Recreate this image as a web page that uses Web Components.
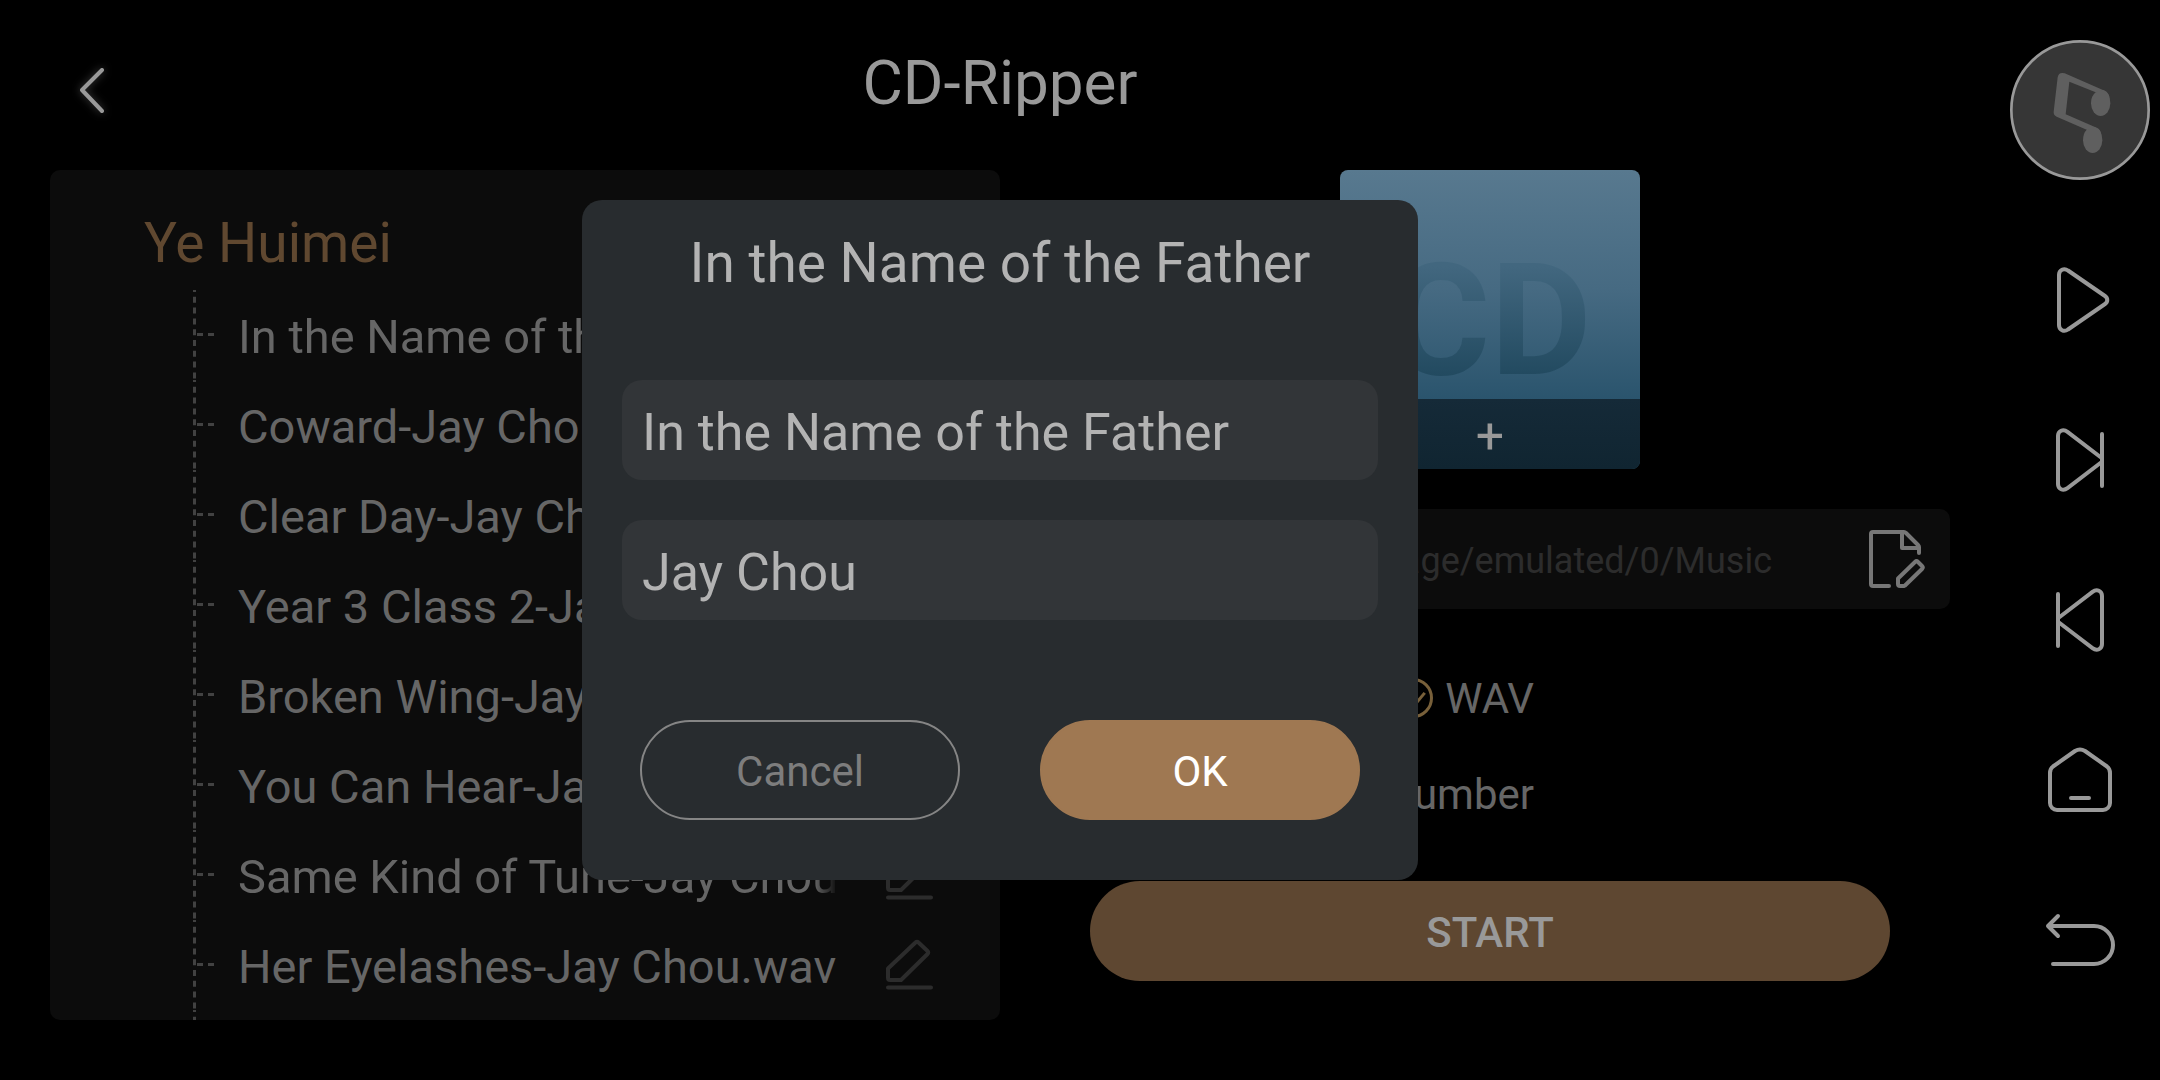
<!DOCTYPE html>
<html lang="en">
  <head>
    <meta charset="utf-8">
    <title>CD-Ripper</title>
    <style>
      body {
        margin: 0;
        background: #000;
        font-family: Roboto, "Liberation Sans", sans-serif;
      }
    </style>
  </head>
  <body>

    <!-- APP ----------------------------------------------------------------------------------------- -->

    <template id="ripper-app-template">
      <style>
        *{box-sizing: border-box;}
        :host {
          display: flex; flex-flow: row nowrap;
          height: 100vh;
          overflow: hidden;
          color: #666;
        }
        main {
          flex: 1; min-width: 0;
          position: relative;
          display: flex; flex-flow: column nowrap;
        }
        header {
          display: grid; grid-template-columns: 1fr auto 1fr; align-items: center;
          height: 170px;
          padding: 0 50px;
        }
        header button {
          width: 80px; height: 80px;
          padding: 0; border: 0; background: none;
        }
        header svg {
          display: block;
          filter: drop-shadow(0 0 4px #444);
        }
        h1 {
          margin: 0; padding-bottom: 6px;
          font-size: 62px; font-weight: 400;
          color: #999;
        }
        .content {
          flex: 1; min-height: 0;
          display: grid; grid-template-columns: 95fr 92fr; gap: 30px;
          padding: 0 50px 60px;
        }
        .overlay {
          position: absolute; inset: 0;
          display: grid; place-items: center;
        }
      </style>
      <main>
        <header>
          <button aria-label="Back">
            <svg width="80" height="80" viewBox="0 0 80 80" fill="none" stroke="#999" stroke-width="4" stroke-linecap="round" stroke-linejoin="round"><path d="M52 25 32 45 52 66"/></svg>
          </button>
          <h1>CD-Ripper</h1>
        </header>
        <div class="content">
          <ripper-tracks>
            <span slot="album">Ye Huimei</span>
            <ripper-track>In the Name of the Father-Jay Chou.wav</ripper-track>
            <ripper-track>Coward-Jay Chou.wav</ripper-track>
            <ripper-track>Clear Day-Jay Chou.wav</ripper-track>
            <ripper-track>Year 3 Class 2-Jay Chou.wav</ripper-track>
            <ripper-track>Broken Wing-Jay Chou.wav</ripper-track>
            <ripper-track>You Can Hear-Jay Chou.wav</ripper-track>
            <ripper-track>Same Kind of Tune-Jay Chou.wav</ripper-track>
            <ripper-track>Her Eyelashes-Jay Chou.wav</ripper-track>
            <ripper-track></ripper-track>
          </ripper-tracks>
          <ripper-settings></ripper-settings>
        </div>
        <div class="overlay">
          <ripper-dialog name="In the Name of the Father" artist="Jay Chou"></ripper-dialog>
        </div>
      </main>
      <ripper-sidebar></ripper-sidebar>
    </template>

    <!-- TRACK LIST ---------------------------------------------------------------------------------- -->

    <template id="ripper-tracks-template">
      <style>
        *{box-sizing: border-box;}
        :host {
          display: block;
          background: #0c0c0c;
          border-radius: 10px;
          overflow: hidden;
        }
        h2 {
          margin: 0; padding: 26px 94px 0;
          font-size: 55px; font-weight: 400; line-height: 94px;
          color: #604830;
        }
      </style>
      <h2><slot name="album"></slot></h2>
      <div role="list"><slot></slot></div>
    </template>

    <template id="ripper-track-template">
      <style>
        *{box-sizing: border-box;}
        :host {
          display: flex; flex-flow: row nowrap; align-items: center;
          height: 90px;
          padding-right: 60px;
        }
        .rail {
          flex: 0 0 188px;
        }
        .name {
          flex: 1; min-width: 0;
          padding-top: 4px;
          font-size: 47px; line-height: 60px;
          white-space: nowrap;
          overflow: hidden;
        }
        .name.long {
          -webkit-mask-image: linear-gradient(to left, transparent, #000 24px);
          mask-image: linear-gradient(to left, transparent, #000 24px);
        }
        button {
          flex: 0 0 60px;
          margin-left: 42px;
          padding: 0; border: 0; background: none;
        }
        svg {
          display: block;
        }
      </style>
      <svg class="rail" width="188" height="90" viewBox="0 0 188 90" fill="none" stroke="#424242" stroke-width="3">
        <path d="M144.500 0V90" stroke-dasharray="6 4.8" stroke-dashoffset="4"/>
        <path d="M147 44.500H153M158 44.500H164"/>
      </svg>
      <div class="name"><slot></slot></div>
      <button aria-label="Edit track">
        <svg width="60" height="60" viewBox="0 0 60 60" fill="none" stroke="#2c2c2c" stroke-width="4" stroke-linecap="round" stroke-linejoin="round">
          <path d="M8 33.5 35.5 7.500q1.500-1.500 3 0L47.500 16q1.500 1.500 0 3L21 45H10q-2 0-2-2ZM8 52.500H51"/>
        </svg>
      </button>
    </template>

    <!-- SETTINGS ------------------------------------------------------------------------------------ -->

    <template id="ripper-settings-template">
      <style>
        *{box-sizing: border-box;}
        :host {
          display: flex; flex-flow: column nowrap; align-items: center;
          gap: 40px;
        }
        button {
          padding: 0; border: 0; background: none;
          font: inherit;
        }
        .cover {
          width: 300px; height: 299px;
          display: flex; flex-flow: column nowrap; justify-content: flex-end;
          border-radius: 8px;
          overflow: hidden;
          background: linear-gradient(#58798f, #466a82 40%, #2a546d 77%, #22495f);
        }
        .cover span {
          text-align: center;
          font-size: 156px; font-weight: 700; line-height: 156px;
          color: transparent;
          background: linear-gradient(#42677f 15%, #224a60 85%);
          -webkit-background-clip: text;
          background-clip: text;
        }
        .cover button {
          height: 70px;
          padding-top: 4px;
          background: linear-gradient(#152a38, #102531);
          font-size: 50px; line-height: 66px;
          color: #999;
        }
        .path {
          width: 100%; height: 100px;
          display: flex; flex-flow: row nowrap; align-items: center; justify-content: flex-end;
          gap: 88px;
          padding-right: 20px;
          background: #0c0c0c;
          border-radius: 10px;
          font-size: 36px;
          color: #2c2c2c;
        }
        .path span {
          padding-top: 4px;
        }
        .path svg {
          display: block;
        }
        .options {
          width: 100%;
          padding-right: 416px;
          font-size: 42px;
        }
        label {
          display: flex; flex-flow: row nowrap; align-items: center; justify-content: flex-end;
          gap: 12px;
          height: 96px;
          padding-top: 2px;
        }
        input {
          appearance: none;
          width: 40px; height: 40px;
          margin: 0;
          display: grid; place-items: center;
          border: 3px solid #78603a;
          border-radius: 50%;
        }
        input::before {
          content: "";
          width: 20px; height: 10px;
          border: solid #78603a; border-width: 0 0 3px 3px;
          transform: rotate(-50deg);
        }
        .start {
          width: 87%; height: 100px;
          padding-top: 2px;
          border-radius: 50px;
          background: #5e4731;
          font-size: 42px; font-weight: 500;
          color: #999;
        }
      </style>
      <div class="cover">
        <span>CD</span>
        <button aria-label="Add cover">+</button>
      </div>
      <div class="path">
        <span>/storage/emulated/0/Music</span>
        <button aria-label="Change folder">
          <svg width="70" height="70" viewBox="0 0 70 70" fill="none" stroke="#777" stroke-width="4" stroke-linecap="round" stroke-linejoin="round">
            <path d="M29 62H13q-2 0-2-2V10q0-2 2-2H44q1 0 2 1L58 21q1 1 1 2V29M42 9V24H58"/>
            <path d="M38 54.500 55 38q1.500-1.500 3 0L62 42q1.500 1.500 0 3L45 61.500 44 62H40q-2 0-2-2Z"/>
          </svg>
        </button>
      </div>
      <div class="options">
        <label><input type="radio" name="format" checked>WAV</label>
        <label>Number</label>
      </div>
      <button class="start">START</button>
    </template>

    <!-- DIALOG -------------------------------------------------------------------------------------- -->

    <template id="ripper-dialog-template">
      <style>
        *{box-sizing: border-box;}
        :host {
          display: block;
          width: 836px; max-width: 90%;
        }
        dialog {
          position: static;
          width: 100%;
          margin: 0; padding: 0 40px 60px; border: 0;
          background: #282c2f;
          border-radius: 20px;
          color: #b3b3b3;
        }
        h2 {
          margin: 0 0 54px;
          text-align: center;
          font-size: 55px; font-weight: 400; line-height: 126px;
        }
        form {
          display: flex; flex-flow: column nowrap;
          gap: 40px;
        }
        input {
          width: 100%; height: 100px;
          padding: 4px 20px 0; border: 0;
          background: #323538;
          border-radius: 20px;
          font: inherit; font-size: 52px;
          color: inherit;
        }
        .actions {
          display: flex; flex-flow: row nowrap;
          gap: 80px;
          padding: 60px 18px 0;
        }
        button {
          flex: 1;
          height: 100px;
          padding: 2px 0 0;
          border: 2px solid #858585; border-radius: 50px;
          background: none;
          font: inherit; font-size: 42px;
          color: #7d7d7d;
        }
        .ok {
          border-color: #9f7852;
          background: #9f7852;
          color: #fff;
        }
      </style>
      <dialog open aria-labelledby="title">
        <h2 id="title"></h2>
        <form method="dialog">
          <input id="name" type="text" aria-label="Track name">
          <input id="artist" type="text" aria-label="Artist">
          <div class="actions">
            <button type="button">Cancel</button>
            <button type="button" class="ok">OK</button>
          </div>
        </form>
      </dialog>
    </template>

    <!-- SIDEBAR ------------------------------------------------------------------------------------- -->

    <template id="ripper-sidebar-template">
      <style>
        *{box-sizing: border-box;}
        :host {
          flex: 0 0 160px;
          display: flex; flex-flow: column nowrap; align-items: center;
          padding-top: 40px;
        }
        button {
          width: 160px; height: 160px;
          display: grid; place-items: center;
          padding: 0; border: 0; background: none;
        }
        .disc {
          width: 140px; height: 140px;
          margin-bottom: 40px;
        }
        svg {
          display: block;
          width: 80px; height: 80px;
          fill: none; stroke: #999; stroke-width: 4; stroke-linecap: round; stroke-linejoin: round;
        }
        .disc svg {
          width: 140px; height: 140px;
        }
      </style>
      <button class="disc" aria-label="Now playing">
        <svg viewBox="90 60 420 420">
          <circle cx="300" cy="270" r="206" fill="#363636" stroke-width="8"/>
          <g fill="#5f5f5f" stroke="none">
            <path d="M233 172Q236 155 254 160L374 212Q384 216 388 230L347 217 268 185 257 283 350 323Q362 328 364 344L320 329 230 290Q220 285 221 275Z"/>
            <path d="M347 217Q333 228 333 250A29 38 0 1 0 391 250Q391 218 370 210Z"/>
            <path d="M320 329Q309 340 309 361A29 38 0 1 0 367 361Q367 328 344 321Z"/>
          </g>
        </svg>
      </button>
      <button aria-label="Play">
        <svg viewBox="0 0 80 80"><path d="M19 15c0-5 5-7.500 9-4.500L65 36c3 2 3 6 0 8L28 69.500C24 72.500 19 70 19 65Z"/></svg>
      </button>
      <button aria-label="Next">
        <svg viewBox="0 0 80 80"><path d="M61 37.500 27.500 11.800C23 8.500 18 11 18 16V64c0 5 5 7.500 9.500 4.200L61 42.500M62 14V66"/></svg>
      </button>
      <button aria-label="Previous">
        <svg viewBox="0 0 80 80"><path d="M19 37.500 52.500 11.800C57 8.500 62 11 62 16V64c0 5-5 7.500-9.500 4.200L19 42.500M18 14V66"/></svg>
      </button>
      <button aria-label="Home">
        <svg viewBox="0 0 80 80"><path d="M10 33c0-3 1-5 3-6.500L35 11q5-3 10 0L67 26.500c2 1.500 3 3.500 3 6.500V63a7 7 0 0 1-7 7H17a7 7 0 0 1-7-7ZM31 58H49"/></svg>
      </button>
      <button aria-label="Return">
        <svg viewBox="0 0 80 80"><path d="M18 16 8 26 18 36M8 26H54a19 19 0 0 1 0 38H13"/></svg>
      </button>
    </template>

    <script>
      class RipperElement extends HTMLElement {

        constructor(){
          super();
          this.template = document.querySelector('#' + this.localName + '-template');
          this.attachShadow({mode: 'open'});
          this.shadowRoot.appendChild(this.template.content.cloneNode(true));
        }

      }

      class RipperAppElement extends RipperElement {}

      class RipperTracksElement extends RipperElement {}

      class RipperTrackElement extends RipperElement {

        connectedCallback () {
          this.setAttribute('role', 'listitem');
          // names that do not fit fade out at the right edge
          requestAnimationFrame(() => {
            const name = this.shadowRoot.querySelector('.name');
            name.classList.toggle('long', name.scrollWidth > name.clientWidth);
          });
        }

      }

      class RipperSettingsElement extends RipperElement {}

      class RipperDialogElement extends RipperElement {

        connectedCallback () {
          this.shadowRoot.querySelector('#title').textContent = this.getAttribute('name');
          this.shadowRoot.querySelector('#name').value = this.getAttribute('name');
          this.shadowRoot.querySelector('#artist').value = this.getAttribute('artist');
          this.shadowRoot.querySelectorAll('button').forEach(button => {
            button.addEventListener('click', () => this.remove());
          });
        }

      }

      class RipperSidebarElement extends RipperElement {}

      window.customElements.define('ripper-track', RipperTrackElement);
      window.customElements.define('ripper-tracks', RipperTracksElement);
      window.customElements.define('ripper-settings', RipperSettingsElement);
      window.customElements.define('ripper-dialog', RipperDialogElement);
      window.customElements.define('ripper-sidebar', RipperSidebarElement);
      window.customElements.define('ripper-app', RipperAppElement);
    </script>

    <ripper-app></ripper-app>

  </body>
</html>
